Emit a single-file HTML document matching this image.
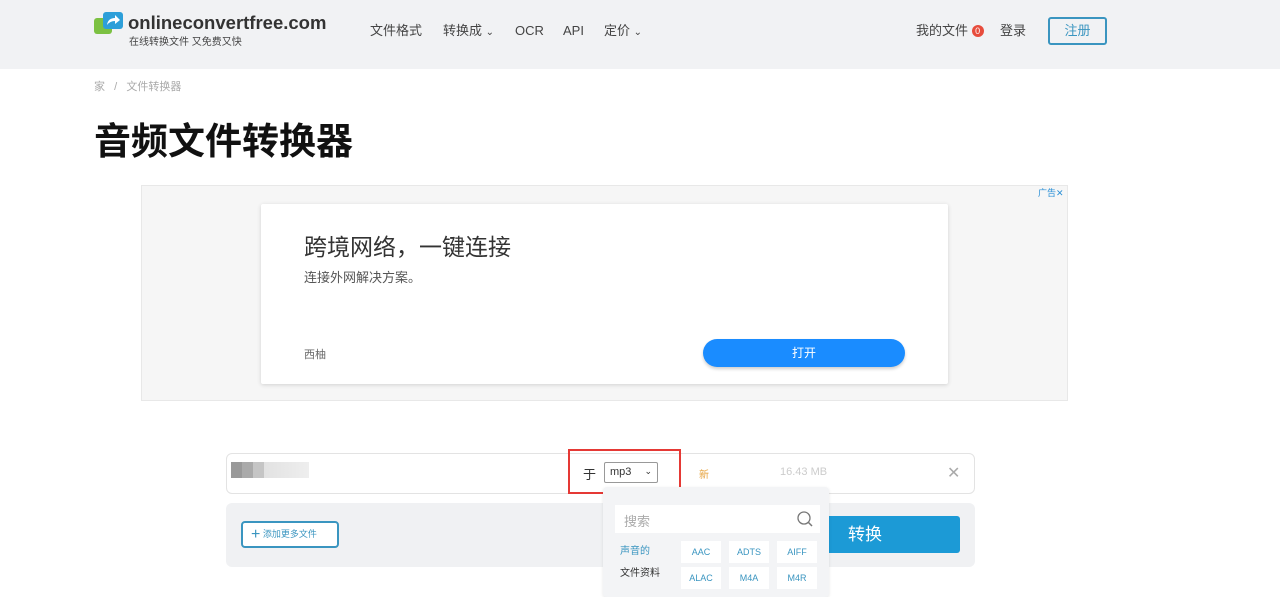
<!DOCTYPE html>
<html><head><meta charset="utf-8"><style>
*{margin:0;padding:0;box-sizing:border-box}
body{width:1280px;height:588px;overflow:hidden;background:#fff;font-family:"Liberation Sans","Noto Sans CJK SC",sans-serif;position:relative;color:#333}
.a{position:absolute}
.hdr{left:0;top:0;width:1280px;height:69px;background:#f1f2f4}
.nav{font-size:13px;color:#444;top:23px;line-height:16px;height:16px}
.t{position:absolute;width:40px;height:22px;background:#fff;font-size:9px;color:#3a95c0;text-align:center;line-height:22px}
</style></head><body>
<div class="a hdr"></div>
<svg class="a" style="left:94px;top:12px" width="30" height="24"><rect x="0" y="6" width="18" height="16" rx="3" fill="#7cc142"/><rect x="9" y="0" width="20" height="17" rx="3" fill="#2d9fd9"/><path d="M13 13 Q14 6 21 6 L21 3 L26 8 L21 12 L21 9 Q16 9 13 13Z" fill="#fff"/></svg>
<div class="a" style="left:128px;top:12px;font-size:18.5px;font-weight:bold;color:#333">onlineconvertfree.com</div>
<div class="a" style="left:129px;top:36px;font-size:10px;color:#444;line-height:14px">在线转换文件 又免费又快</div>
<div class="a nav" style="left:370px">文件格式</div>
<div class="a nav" style="left:443px">转换成 <span style="font-size:10px">⌄</span></div>
<div class="a nav" style="left:515px">OCR</div>
<div class="a nav" style="left:563px">API</div>
<div class="a nav" style="left:604px">定价 <span style="font-size:10px">⌄</span></div>
<div class="a nav" style="left:916px">我的文件 <span style="display:inline-block;width:12px;height:12px;border-radius:6px;background:#e74c3c;color:#fff;font-size:9px;text-align:center;line-height:12px;vertical-align:1px">0</span></div>
<div class="a nav" style="left:1000px">登录</div>
<div class="a" style="left:1048px;top:17px;width:59px;height:28px;border:2px solid #3a95c0;border-radius:3px;color:#3a95c0;font-size:13px;text-align:center;line-height:24px">注册</div>
<div class="a" style="left:94px;top:78px;font-size:11px;color:#aaa">家 &nbsp; / &nbsp; 文件转换器</div>
<div class="a" style="left:94px;top:115px;font-size:37px;font-weight:bold;color:#111;line-height:54px">音频文件转换器</div>
<div class="a" style="left:141px;top:185px;width:927px;height:216px;background:#f6f6f6;border:1px solid #e8e8e8"></div>
<div class="a" style="left:1038px;top:186px;font-size:9px;color:#2a8fd6">广告✕</div>
<div class="a" style="left:261px;top:204px;width:687px;height:180px;background:#fff;box-shadow:0 1px 4px rgba(0,0,0,.15);border-radius:2px"></div>
<div class="a" style="left:304px;top:228px;font-size:23px;color:#333">跨境网络，一键连接</div>
<div class="a" style="left:304px;top:267px;font-size:13px;color:#555">连接外网解决方案。</div>
<div class="a" style="left:304px;top:346px;font-size:11px;color:#666">西柚</div>
<div class="a" style="left:703px;top:339px;width:202px;height:28px;background:#1a8cff;border-radius:14px;color:#fff;font-size:12px;text-align:center;line-height:28px;box-shadow:0 2px 3px rgba(0,0,0,.2)">打开</div>
<div class="a" style="left:226px;top:453px;width:749px;height:41px;border:1px solid #e3e3e3;border-radius:6px"></div>
<div class="a" style="left:231px;top:462px;width:78px;height:16px;background:linear-gradient(90deg,#999 0,#999 11px,#aaa 11px,#aaa 22px,#c5c5c5 22px,#c5c5c5 33px,#e2e2e2 33px,#eee 78px)"></div>
<div class="a" style="left:583px;top:464px;font-size:13px">于</div>
<div class="a" style="left:604px;top:462px;width:54px;height:21px;border:1px solid #999;border-radius:2px;font-size:11px;padding:3px 5px">mp3 <span style="float:right;font-size:9px">⌄</span></div>
<div class="a" style="left:568px;top:449px;width:113px;height:45px;border:2px solid #e53935"></div>
<div class="a" style="left:699px;top:466px;font-size:10px;color:#e6a23c">新</div>
<div class="a" style="left:780px;top:466px;font-size:11px;color:#ccc">16.43 MB</div>
<div class="a" style="left:947px;top:463px;font-size:16px;color:#aaa">✕</div>
<div class="a" style="left:226px;top:503px;width:749px;height:64px;background:#f0f1f3;border-radius:6px"></div>
<div class="a" style="left:241px;top:521px;width:98px;height:27px;border:2px solid #3a95c0;border-radius:4px;background:#fff;font-size:9px;color:#3a95c0;line-height:23px;padding-left:8px"><span style="font-size:16px;vertical-align:-2px">+</span> 添加更多文件</div>
<div class="a" style="left:810px;top:516px;width:150px;height:37px;background:#1c9ad6;border-radius:3px;color:#fff;font-size:17px;line-height:37px;padding-left:38px">转换</div>
<div class="a" style="left:603px;top:487px;width:226px;height:110px;background:#f3f4f6;border-radius:4px;box-shadow:0 1px 3px rgba(0,0,0,.1)"></div>
<div class="a" style="left:615px;top:505px;width:205px;height:28px;background:#fff;font-size:13px;color:#aaa;padding:6px 9px">搜索</div>
<svg class="a" style="left:796px;top:510px" width="18" height="18"><circle cx="8" cy="8" r="6" fill="none" stroke="#777" stroke-width="1.3"/><path d="M12.5 12.5 L16 16" stroke="#777" stroke-width="1.5"/></svg>
<div class="a" style="left:620px;top:542px;font-size:10px;color:#3a95c0">声音的</div>
<div class="a" style="left:620px;top:564px;font-size:10px;color:#333">文件资料</div>
<div class="t" style="left:681px;top:541px">AAC</div>
<div class="t" style="left:729px;top:541px">ADTS</div>
<div class="t" style="left:777px;top:541px">AIFF</div>
<div class="t" style="left:681px;top:567px">ALAC</div>
<div class="t" style="left:729px;top:567px">M4A</div>
<div class="t" style="left:777px;top:567px">M4R</div>
</body></html>
